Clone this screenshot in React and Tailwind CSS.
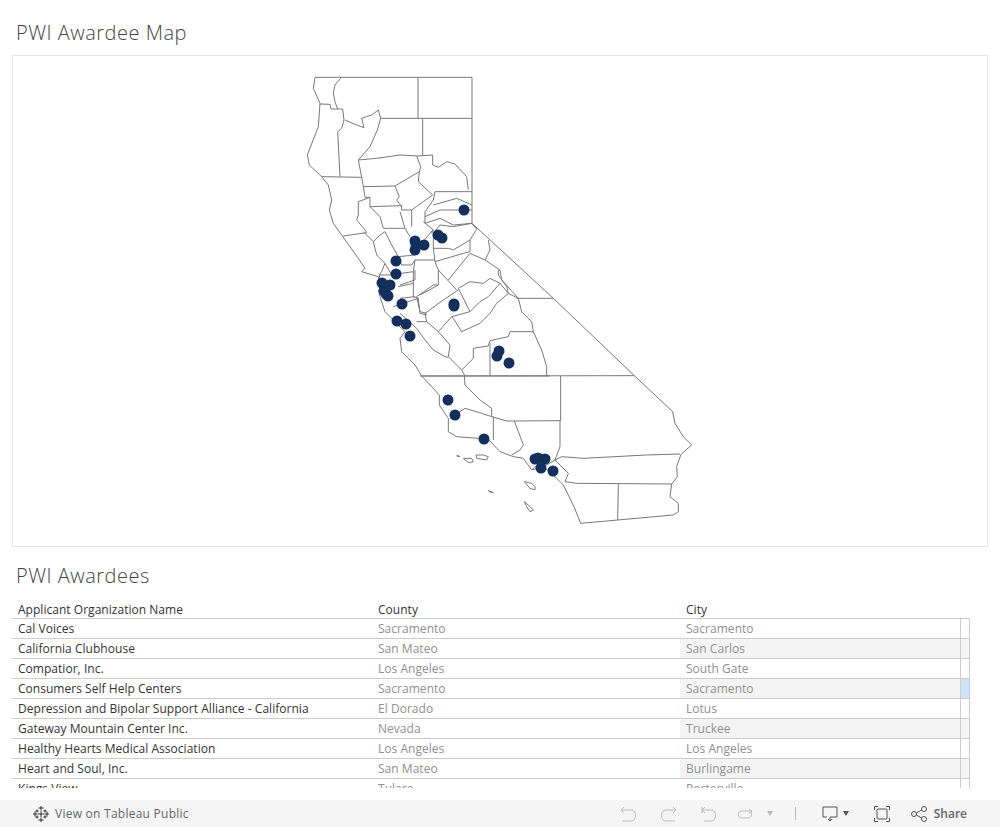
import React from 'react';

const font = { fontFamily: '"Open Sans", sans-serif' };

const rows = [
    ['Cal Voices', 'Sacramento', 'Sacramento'],
    ['California Clubhouse', 'San Mateo', 'San Carlos'],
    ['Compatior, Inc.', 'Los Angeles', 'South Gate'],
    ['Consumers Self Help Centers', 'Sacramento', 'Sacramento'],
    ['Depression and Bipolar Support Alliance - California', 'El Dorado', 'Lotus'],
    ['Gateway Mountain Center Inc.', 'Nevada', 'Truckee'],
    ['Healthy Hearts Medical Association', 'Los Angeles', 'Los Angeles'],
    ['Heart and Soul, Inc.', 'San Mateo', 'Burlingame'],
    ['Kings View', 'Tulare', 'Porterville'],
];

// county lines, each set traced at 3x from its own corner of the map
const northLines = [
    '75,52 546,52 546,490 789,714',
    '75,52 70,85 90,130 85,200 52,285 58,315 95,350 115,375 125,420 118,450 130,490 155,525 205,595 225,625 215,635 265,650 272,690 285,720',
    '152,55 135,75 130,100 135,125 143,148',
    '90,132 120,133 123,147 158,147 162,180 155,205 143,215 150,350',
    '384,52 384,175',
    '546,175 272,175 265,150 245,165 215,175 222,203 195,193 165,180',
    '272,175 262,210 240,260 205,300',
    '398,175 398,285',
    '205,300 260,295 330,285 380,288 428,285 428,315 445,322 470,305 495,312 530,350 535,390',
    '546,395 435,395 430,420 405,455 405,490',
    '95,350 215,352 205,300',
    '215,352 220,380 315,378 388,335 392,320 380,288',
    '388,335 385,365 428,405',
    '315,378 328,410 320,420 335,440',
    '220,380 225,412 240,412 240,440 335,437',
    '428,405 400,425 365,450 365,500',
    '240,440 270,470 280,505 345,505',
    '240,412 205,425 205,465 200,480 225,510 230,518 160,528',
    '335,437 335,450 365,450',
    '330,455 345,505 360,530',
    '430,435 500,415 546,435',
    '405,470 450,450 546,450',
    '405,490 450,475 490,495 546,490',
];

const midLines = [
    '70,95 100,125 120,105 135,95 155,135 175,170 225,165',
    '100,125 110,165 135,190 155,225',
    '118,225 150,225 220,215',
    '135,190 125,215 118,225 120,240',
    '175,170 185,195 215,195 225,180 285,180',
    '225,165 245,130 280,88',
    '250,65 280,90 275,100',
    '225,180 220,215 220,290 235,295 240,340 260,345',
    '175,260 220,250',
    '160,320 235,295',
];

const sierraLines = [
    '40,175 85,175 100,180 150,150',
    '40,130 40,175 45,215 55,240 110,300',
    '45,215 130,190 150,185',
    '85,270 150,190',
    '150,150 150,185',
    '40,130 60,105 100,110 155,100 170,118 150,150',
    '205,150 210,180 195,210 240,240 245,270 295,325',
    '150,190 195,210',
    '0,315 55,285 55,240',
];

const centerLines = [
    '175,55 210,125 155,140 115,185',
    '175,60 130,90 75,130 80,155 115,185 150,225 145,260 185,300 195,318',
    '50,80 100,45 115,45',
    '50,80 60,125 80,130',
    '175,55 210,35 250,40 270,25 300,40 265,80 240,95 210,125',
    '300,40 325,70 290,100 270,130 240,160 185,185 160,145 155,140',
    '295,0 295,15 320,50 325,70 355,85',
    '400,185 330,185 325,200 270,212 265,228 220,235 220,265 185,300',
    '270,220 270,318',
    '60,318 450,318',
    '0,130 50,175 75,210 100,240 135,260 145,262',
    '50,155 80,155',
    '45,0 45,30 0,45',
    '45,80 0,85',
];

const southLines = [
    '610,25 853,257 968,365 975,400 1000,440 1025,465 993,493 980,530 982,560 965,582 960,620 985,640 985,665 970,675 692,700',
    '692,700 672,650 640,585 610,555 580,530 545,540 520,505 490,500 450,485 420,453 385,445 320,440 295,425 295,385 268,345 268,315 245,290 215,258 195,225 155,185 150,145 165,125 140,100 105,65 90,20 85,0',
    '500,25 610,25',
    '505,25 515,65 545,95 550,125 575,180 590,230 590,258',
    '215,258 853,257',
    '632,258 632,392 493,393',
    '630,392 630,470 615,510',
    '343,258 345,285 390,330 425,355 425,380 470,393 493,393',
    '493,393 520,465 510,480 485,495',
    '430,380 430,450',
    '300,385 345,355 395,370 425,380',
    '615,510 655,550 645,575',
    '615,510 635,500 700,505 890,495 990,492',
    '645,575 680,580 965,582',
    '805,582 803,690',
    '545,540 555,530 590,525 615,510',
    '320,495 330,500 320,498',
    '340,505 365,505 370,515 355,518 340,505',
    '378,495 400,495 415,500 410,510 380,505 378,495',
    '523,575 545,580 555,590 555,600 540,595 523,575',
    '415,602 430,608 420,606 415,602',
    '523,635 540,650 550,660 540,665 530,650 523,635',
];

const dots = [
    [464, 210], [438, 235], [442, 238], [415, 241], [416, 245], [424, 245], [415, 250],
    [396, 261], [396, 274], [382, 283], [390, 285], [384, 291], [388, 296], [386, 294],
    [402, 304], [454, 304], [454, 306], [397, 321], [406, 324], [410, 336], [499, 351],
    [497, 356], [509, 363], [448, 400], [455, 415], [484, 439], [535, 459], [538, 458],
    [545, 459], [541, 468], [553, 471],
];

function TableauMark() {
    const marks = [[8, 2, 2.5], [8, 8, 3], [8, 14, 2.5], [2, 8, 2.5], [14, 8, 2.5], [4, 5, 1.5], [12, 5, 1.5], [4, 11, 1.5], [12, 11, 1.5]];
    return (
        <svg width="16" height="16" viewBox="0 0 16 16" stroke="#333" strokeWidth="1" fill="none">
            {marks.map(([x, y, s]) => (
                <path key={`${x}-${y}`} d={`M${x - s} ${y}H${x + s}M${x} ${y - s}V${y + s}`} />
            ))}
        </svg>
    );
}

function Icon({ children, w = 16 }) {
    return (
        <svg width={w} height="16" viewBox={`0 0 ${w} 16`} fill="none" stroke="#bbb" strokeWidth="1">
            {children}
        </svg>
    );
}

function Traced({ x, y, lines }) {
    return (
        <g transform={`translate(${x} ${y}) scale(0.33333)`} stroke="#777" strokeWidth="3">
            {lines.map((p, i) => <polyline key={i} points={p} />)}
        </g>
    );
}

export default function App() {
    return (
        <div className="flex flex-col h-[827px] w-[1000px] overflow-hidden bg-white" style={font}>
            <h1 className="h-[55px] pl-4 pt-[19px] text-[20px] leading-[28px] font-light tracking-[0.5px] text-[#444]">PWI Awardee Map</h1>

            <div className="mx-3 h-[492px] border border-[#e6e6e6]">
                <svg width="974" height="490" viewBox="13 56 974 490" fill="none" strokeLinejoin="round">
                    <Traced x={290} y={60} lines={northLines} />
                    <Traced x={340} y={200} lines={midLines} />
                    <Traced x={420} y={190} lines={sierraLines} />
                    <Traced x={400} y={270} lines={centerLines} />
                    <Traced x={350} y={290} lines={southLines} />
                    {dots.map(([x, y], i) => <circle key={i} cx={x} cy={y} r="5.5" fill="#152f5c" />)}
                </svg>
            </div>

            <h2 className="h-[52px] pl-4 pt-[15px] text-[20px] leading-[28px] font-light tracking-[0.5px] text-[#444]">PWI Awardees</h2>

            <div className="ml-3 w-[958px] h-[189px] overflow-hidden text-[12px] tracking-[0.03px]">
                <div className="flex h-[20px] items-center border-b border-[#ccc] pt-[2px] pr-[10px] text-[#333]">
                    <div className="w-[360px] pl-[6px]">Applicant Organization Name</div>
                    <div className="w-[308px] pl-[6px]">County</div>
                    <div className="pl-[6px]">City</div>
                </div>
                {rows.map((r, i) => (
                    <div key={r[0]} className="flex h-[20px] items-center border-b border-[#ccc]">
                        <div className="w-[360px] h-full flex items-center pl-[6px] text-[#333]">{r[0]}</div>
                        <div className="w-[308px] h-full flex items-center pl-[6px] text-[#909090]">{r[1]}</div>
                        <div className={`flex-1 h-full flex items-center pl-[6px] text-[#909090] ${i % 2 ? 'bg-[#f4f4f4]' : ''}`}>{r[2]}</div>
                        <div className={`w-[10px] h-full border-l border-r border-[#ccc] ${i === 3 ? 'bg-[#cfe3f7]' : i % 2 ? 'bg-[#f4f4f4]' : ''}`}></div>
                    </div>
                ))}
            </div>

            <div className="mt-auto h-[27px] bg-[#f5f5f5] flex items-center text-[12px] text-[#666]">
                <div className="ml-[33px] flex items-center gap-[6px]">
                    <TableauMark />
                    <span className="font-medium tracking-[0.25px]">View on Tableau Public</span>
                </div>
                <div className="ml-auto flex items-center pr-[33px]">
                    <Icon><path d="M1 4H11C17 4 17 15 11 15H2M4 1L1 4L4 7" /></Icon>
                    <div className="ml-[25px]"><Icon><path d="M15 4H5C-1 4 -1 15 5 15H14M12 1L15 4L12 7" /></Icon></div>
                    <div className="ml-[24px]"><Icon><path d="M1 1V7M1 4H10C16 4 16 15 10 15H3M4 1L1 4L4 7" /></Icon></div>
                    <div className="ml-[20px]"><Icon><path d="M15 5H5C0 5 0 12 5 12H11C15 12 15 8 14 6M12 3L15 5L12 7" /></Icon></div>
                    <div className="ml-[14px] w-0 h-0 border-x-[3.5px] border-x-transparent border-t-[5px] border-t-[#bbb]"></div>
                    <div className="ml-[22px] w-px h-[13px] bg-[#bbb]"></div>
                    <div className="ml-[26px]">
                        <svg width="16" height="16" viewBox="0 0 16 16" fill="none" stroke="#555" strokeWidth="1"><path d="M5 11H1V1H15V11H8V14M6 13L8 15L10 13" /></svg>
                    </div>
                    <div className="ml-[5px] w-0 h-0 border-x-[3.5px] border-x-transparent border-t-[5px] border-t-[#555]"></div>
                    <div className="ml-[25px]">
                        <svg width="16" height="16" viewBox="0 0 16 16" fill="none" stroke="#555" strokeWidth="1"><path d="M0.5 4V0.5H4M12 0.5H15.5V4M15.5 12V15.5H12M4 15.5H0.5V12" /><rect x="3" y="3" width="10" height="10" rx="1" /></svg>
                    </div>
                    <div className="ml-[21px]">
                        <svg width="16" height="16" viewBox="0 0 16 16" fill="none" stroke="#555" strokeWidth="1"><circle cx="3" cy="8" r="2.5" /><circle cx="13" cy="3" r="2.5" /><circle cx="13" cy="13" r="2.5" /><path d="M5.2 7L10.8 4M5.2 9L10.8 12" /></svg>
                    </div>
                    <span className="ml-[7px] font-semibold">Share</span>
                </div>
            </div>
        </div>
    );
}
